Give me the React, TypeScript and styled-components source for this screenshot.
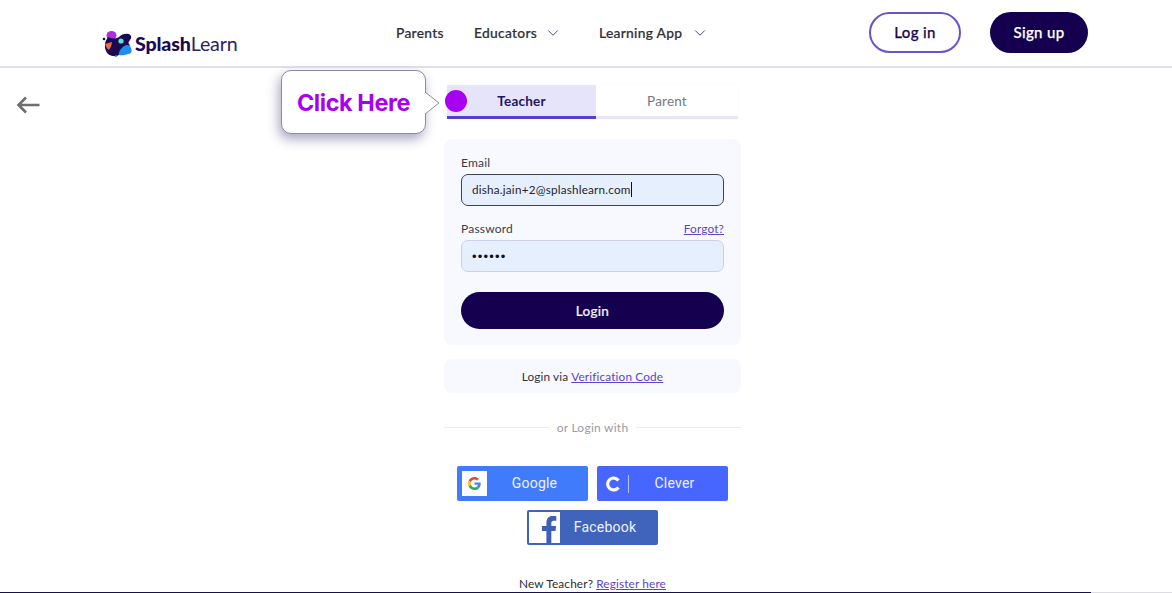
import React from 'react';
import styled, { createGlobalStyle } from 'styled-components';
import { ChevronDown } from 'lucide-react';

const FONT = `Lato, "Noto Sans", sans-serif`;

const Global = createGlobalStyle`
  html, body { margin: 0; padding: 0; background: #fff; overflow: hidden; }
  body { font-family: ${FONT}; }
  * { box-sizing: border-box; }
`;

const Page = styled.div`
  width: 1172px; height: 593px; display: flex; flex-direction: column; overflow: hidden;
`;
const Header = styled.header`
  height: 68px; flex: none; border-bottom: 2px solid #e1dff0;
  display: flex; align-items: flex-start;
  padding-left: 102px; padding-right: 84px;
`;
const Logo = styled.a`
  display: flex; align-items: center; gap: 2px; margin-top: 30px; width: 296px;
`;
const LogoText = styled.span`
  font-size: 19.6px; line-height: 26px; color: #1a0a52; font-weight: 900; letter-spacing: -0.15px;
  margin-top: 1px;
`;
const LogoLight = styled.span`font-weight: 400; color: #2c2266;`;
const Nav = styled.nav`
  display: flex; align-items: center; height: 25px; margin-top: 20px; flex: 1;
`;
const NavItem = styled.a<{ $w: number; $gap?: number }>`
  width: ${p => p.$w}px; display: flex; align-items: center; gap: ${p => p.$gap ?? 7}px;
  font-size: 13.8px; font-weight: 500; color: #2f2f37; letter-spacing: .3px;
  -webkit-text-stroke: .2px #2f2f37;
`;
const NavChevron = styled(ChevronDown)`color: #3f3590; flex: none;`;
const Buttons = styled.div`display: flex; gap: 29px; margin-top: 12px;`;
const OutlineBtn = styled.button`
  width: 92px; height: 41px; border-radius: 21px; border: 2px solid #6653cf; background: #fff;
  padding: 0 0 2px; color: #1a0a52; font: 500 15px ${FONT}; letter-spacing: .35px;
  -webkit-text-stroke: .25px #1a0a52;
`;
const SolidBtn = styled.button`
  width: 98px; height: 41px; border-radius: 21px; border: 0; background: #150050;
  padding: 0 0 2px; color: #fff; font: 500 15px ${FONT}; letter-spacing: .35px;
  -webkit-text-stroke: .25px #fff;
`;
const Main = styled.main`
  flex: 1; display: grid; grid-template-columns: 444px 297px 1fr; min-height: 0;
`;
const BackCell = styled.div`padding: 28px 0 0 16px;`;
const Column = styled.div`display: flex; flex-direction: column; padding-top: 17px;`;
const Tabs = styled.div`
  position: relative; display: flex; margin: 0 3px; height: 34px;
  border-radius: 2px; box-shadow: 0 0 1px rgba(120,120,170,.2);
`;
const Tab = styled.div<{ $active?: boolean; $w: number }>`
  width: ${p => p.$w}px; display: flex; align-items: center; justify-content: center;
  padding-top: 1px;
  font-size: 13.5px; letter-spacing: .2px;
  font-weight: ${p => (p.$active ? 700 : 400)};
  color: ${p => (p.$active ? '#24145f' : '#77777f')};
  background: ${p => (p.$active ? '#e5e4fb' : '#fff')};
  border-bottom: 3px solid ${p => (p.$active ? '#5a3fce' : '#e8e6f6')};
`;
const Dot = styled.span`
  position: absolute; left: -2px; top: 5px; width: 22px; height: 22px; border-radius: 50%;
  background: #a800f0;
`;
const Callout = styled.div`
  position: absolute; left: -166px; top: -15px; width: 145px; height: 64px;
  background: #fff; border: 1px solid #8d8ba3; border-radius: 10px;
  box-shadow: -2px 5px 12px rgba(60,55,120,.45);
  display: flex; align-items: center; justify-content: center;
  font: 700 23.4px Inter, ${FONT}; letter-spacing: -.4px; color: #a800f0; white-space: nowrap;
`;
const CalloutTail = styled.svg`position: absolute; left: 143px; top: 20px;`;
const Card = styled.section`
  margin-top: 20px; height: 206px; padding: 16px 17px 17px; background: #f8f8ff; border-radius: 8px;
  display: flex; flex-direction: column;
`;
const LabelRow = styled.div<{ $top?: number }>`
  display: flex; justify-content: space-between; align-items: center; height: 14px;
  margin-top: ${p => p.$top ?? 0}px; margin-bottom: 5px;
`;
const Label = styled.label`font-size: 12px; color: #3c3c44; letter-spacing: .2px;`;
const SmallLink = styled.a`font-size: 11.8px; color: #5a45cc; text-decoration: underline; letter-spacing: .15px;`;
const Field = styled.div<{ $focus?: boolean }>`
  height: 32px; flex: none; border-radius: 7px; background: #e6effd; padding: 0 10px 2px;
  display: flex; align-items: center;
  border: 1px solid ${p => (p.$focus ? '#3f4252' : '#cfd0e8')};
  font-size: 11.7px; color: #24242c; letter-spacing: .22px;
`;
const Caret = styled.span`width: 1px; height: 15px; background: #111; flex: none;`;
const Dots = styled.span`
  font-size: 13px; letter-spacing: 1.2px; color: #111; margin-top: 2px;
  font-family: "Liberation Sans", sans-serif;
`;
const LoginBtn = styled.button`
  margin-top: 20px; height: 37px; flex: none; border: 0; border-radius: 19px; background: #150050;
  color: #f2f2f8; font: 500 13.5px ${FONT}; letter-spacing: .25px;
  -webkit-text-stroke: .2px #f2f2f8;
`;
const Via = styled.div`
  margin-top: 14px; height: 34px; border-radius: 8px; background: #f8f8ff;
  display: flex; align-items: center; justify-content: center; gap: 3px;
  font-size: 11.8px; color: #33333b; letter-spacing: .12px;
`;
const Divider = styled.div`
  margin-top: 26px; height: 16px; display: flex; align-items: center; gap: 8px;
  font-size: 12px; color: #9b9ba1; letter-spacing: .25px; white-space: nowrap;
  &::before, &::after { content: ''; flex: 1; height: 1px; background: #ebebef; }
`;
const Socials = styled.div`
  margin-top: 31px; display: flex; flex-wrap: wrap; justify-content: center; gap: 9px;
`;
const Social = styled.button<{ $bg: string; $inset: number }>`
  width: 131px; height: 35px; border: 0; border-radius: 2px; padding: 0 ${p => p.$inset}px 0 0;
  background: ${p => p.$bg};
  display: flex; align-items: center; color: #eef2ff;
  font: 400 14px Roboto, sans-serif; letter-spacing: .2px;
`;
const IconBox = styled.span`
  width: 25px; height: 25px; background: #fff; margin-left: 5px; flex: none;
  display: flex; align-items: center; justify-content: center;
`;
const FbBox = styled.span`
  width: 31px; height: 31px; background: #fff; margin-left: 2px; flex: none; padding-right: 1px;
  display: flex; align-items: flex-end; justify-content: flex-end; overflow: hidden;
`;
const CleverIcon = styled.span`
  width: 32px; flex: none; height: 18px; display: flex; align-items: center; justify-content: center;
  border-right: 1px solid #b9c6ff;
`;
const SocialLabel = styled.span`flex: 1; text-align: center; padding-bottom: 2px;`;
const Register = styled.div`
  margin-top: 32px; display: flex; justify-content: center; gap: 3px;
  font-size: 11.8px; color: #2b2b33; letter-spacing: .15px; line-height: 14px;
`;
const BottomBar = styled.div`
  flex: none; height: 1px; background: linear-gradient(to right, #17104a 1091px, #dcdce2 1091px);
`;

const LogoMark = () => (
  <svg width="31" height="26" viewBox="0 0 31 26" aria-hidden>
    <ellipse cx="9.500" cy="4.500" rx="5" ry="4.500" fill="#a92fe0" />
    <path d="M6 6 Q12 9 17 6 Q21 2 27 3 Q31 5 28 9 Q25 12 28 14 Q23 21 15 25 Q6 26 4 20 Q1 13 6 6Z" fill="#1a0a52" />
    <path d="M19 18 Q24 12 28 15 Q32 22 26 23 Q21 25 17 24 Q16 21 19 18Z" fill="#1f8cf2" />
    <path d="M3 13 L10 11 Q10 15 7 19 Q4 17 3 13Z" fill="#f26a3f" />
    <circle cx="19" cy="10" r="2.600" fill="#5fe0d5" />
    <circle cx="2" cy="8" r="1.300" fill="#1a0a52" />
    <circle cx="14" cy="25" r="1" fill="#1f8cf2" />
  </svg>
);

const BackArrow = () => (
  <svg width="24" height="18" viewBox="0 0 24 18" aria-hidden>
    <path d="M23.500 9H2.500M10 1.500 2.500 9l7.500 7.500" fill="none" stroke="#6e6e6e" strokeWidth="2.600" />
  </svg>
);

const GoogleG = () => (
  <svg width="13" height="13" viewBox="0 0 48 48" aria-hidden>
    <path fill="#EA4335" d="M24 9.500c3.500 0 6.700 1.200 9.200 3.600l6.900-6.900C35.900 2.400 30.500 0 24 0 14.600 0 6.500 5.400 2.600 13.200l8 6.200C12.500 13.600 17.800 9.500 24 9.500z" />
    <path fill="#4285F4" d="M46.900 24.500c0-1.600-.1-3.100-.4-4.500H24v9h12.900c-.6 3-2.200 5.500-4.700 7.200l7.700 6c4.500-4.200 7-10.300 7-17.700z" />
    <path fill="#FBBC05" d="M10.500 28.600c-.5-1.400-.8-3-.8-4.600s.3-3.200.8-4.600l-8-6.200C.9 16.500 0 20.100 0 24s.9 7.500 2.600 10.800l7.900-6.200z" />
    <path fill="#34A853" d="M24 48c6.500 0 11.900-2.100 15.900-5.800l-7.700-6c-2.200 1.400-4.900 2.300-8.200 2.300-6.200 0-11.500-4.200-13.400-9.900l-8 6.200C6.500 42.600 14.600 48 24 48z" />
  </svg>
);

const CleverC = () => (
  <svg width="16" height="16" viewBox="0 0 15 15" aria-hidden>
    <path d="M12.600 4.200 A5.600 5.600 0 1 0 12.600 10.800" fill="none" stroke="#fff" strokeWidth="3" />
  </svg>
);

const FacebookF = () => (
  <svg width="18" height="27" viewBox="0 0 20 27" preserveAspectRatio="none" aria-hidden>
    <path d="M6 27V15H1v-5h5V7c0-4.500 2.600-7 6.600-7 1.900 0 3.400.1 4.400.3v4.500h-2.800c-2.100 0-2.700 1-2.700 2.700V10h5.300l-.7 5h-4.600v12z" fill="#3f5fb5" />
  </svg>
);

export default function App() {
  return (
    <Page>
      <Global />
      <Header>
        <Logo>
          <LogoMark />
          <LogoText>Splash<LogoLight>Learn</LogoLight></LogoText>
        </Logo>
        <Nav>
          <NavItem $w={78}>Parents</NavItem>
          <NavItem $w={125}>Educators <NavChevron size={18} strokeWidth={1.2} /></NavItem>
          <NavItem $w={270} $gap={9}>Learning App <NavChevron size={18} strokeWidth={1.2} /></NavItem>
        </Nav>
        <Buttons>
          <OutlineBtn>Log in</OutlineBtn>
          <SolidBtn>Sign up</SolidBtn>
        </Buttons>
      </Header>
      <Main>
        <BackCell><BackArrow /></BackCell>
        <Column>
          <Tabs>
            <Tab $active $w={149}>Teacher</Tab>
            <Tab $w={142}>Parent</Tab>
            <Dot />
            <Callout>
              Click Here
              <CalloutTail width="16" height="24" viewBox="0 0 16 24" aria-hidden>
                <path d="M0 1 L14 12 L0 23" fill="#fff" stroke="#8d8ba3" strokeWidth="1" />
              </CalloutTail>
            </Callout>
          </Tabs>
          <Card>
            <LabelRow><Label>Email</Label></LabelRow>
            <Field $focus>disha.jain+2@splashlearn.com<Caret /></Field>
            <LabelRow $top={15}><Label>Password</Label><SmallLink>Forgot?</SmallLink></LabelRow>
            <Field><Dots>••••••</Dots></Field>
            <LoginBtn>Login</LoginBtn>
          </Card>
          <Via>Login via <SmallLink>Verification Code</SmallLink></Via>
          <Divider>or Login with</Divider>
          <Socials>
            <Social $bg="#3f7bfb" $inset={6}><IconBox><GoogleG /></IconBox><SocialLabel>Google</SocialLabel></Social>
            <Social $bg="#4766ff" $inset={8}><CleverIcon><CleverC /></CleverIcon><SocialLabel>Clever</SocialLabel></Social>
            <Social $bg="#4063bb" $inset={8}><FbBox><FacebookF /></FbBox><SocialLabel>Facebook</SocialLabel></Social>
          </Socials>
          <Register>New Teacher? <SmallLink>Register here</SmallLink></Register>
        </Column>
        <div />
      </Main>
      <BottomBar />
    </Page>
  );
}
